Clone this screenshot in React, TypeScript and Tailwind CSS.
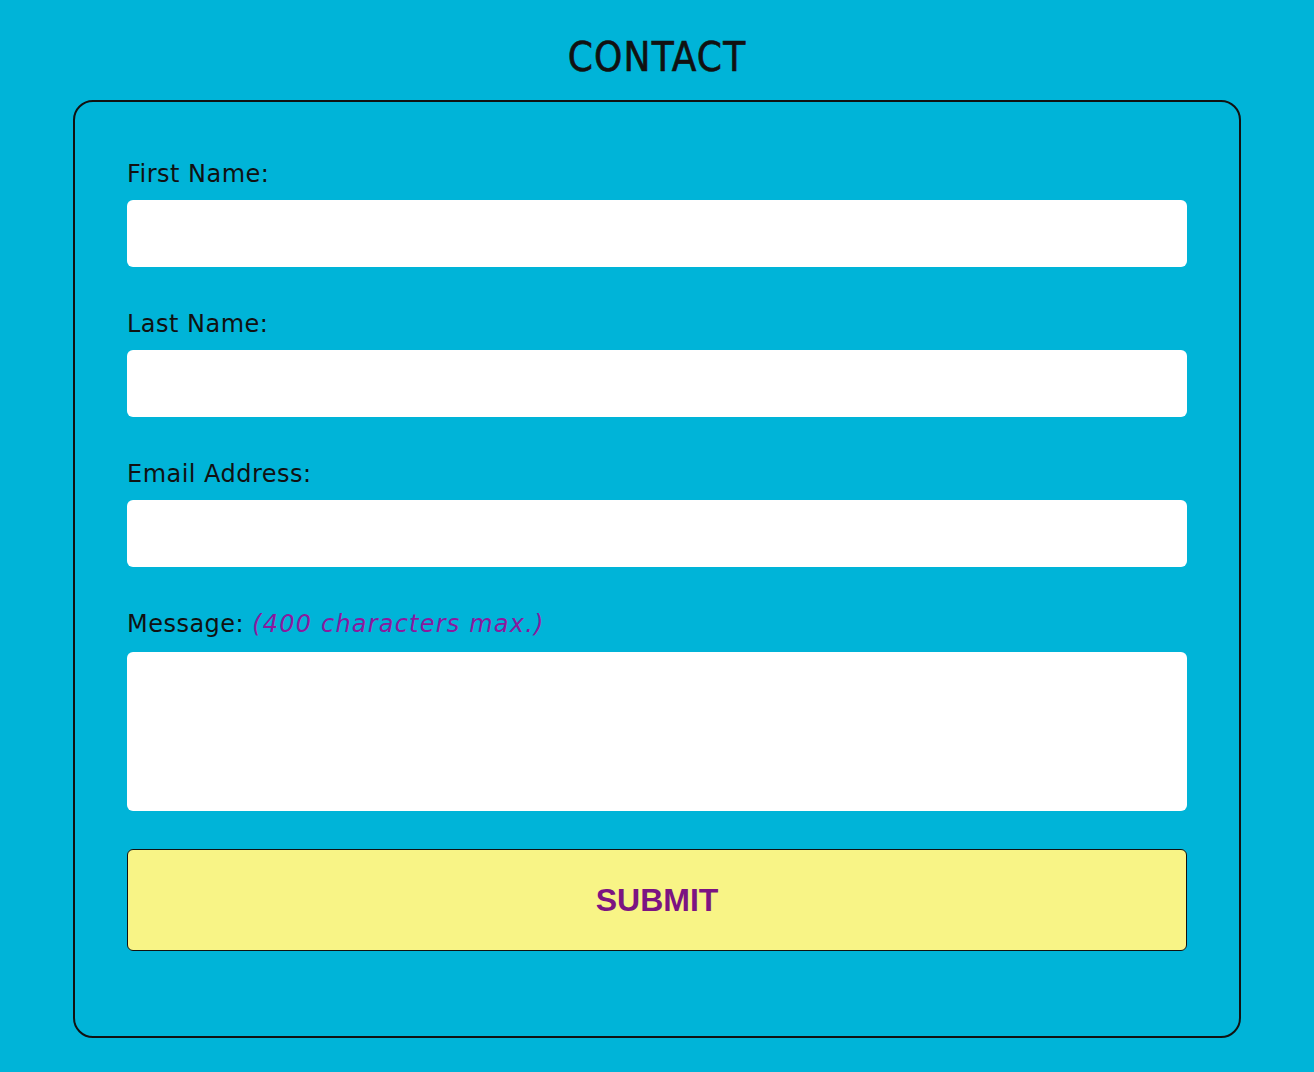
import { useState } from 'react';

export default function App() {
  const [message, setMessage] = useState('');

  const fields = [
    { id: 'first', label: 'First Name:', type: 'text' },
    { id: 'last', label: 'Last Name:', type: 'text' },
    { id: 'email', label: 'Email Address:', type: 'email' },
  ];

  return (
    <div className="min-h-[1072px] bg-[#00b4d8] pt-[34px] pb-[34px]">
      <h2 className="text-center text-[40px] leading-[46px] font-normal font-stretch-condensed tracking-[0.03em] text-[#111] [-webkit-text-stroke:0.6px_#111] [font-family:'DejaVu_Sans',sans-serif]">
        CONTACT
      </h2>

      <form
        className="mx-[73px] mt-[20px] rounded-[20px] border-2 border-[#111] px-[52px] pt-[54px] pb-[85px] [font-family:'DejaVu_Sans',sans-serif]"
        onSubmit={(e) => e.preventDefault()}
      >
        {fields.map((f) => (
          <div key={f.id} className="mb-[39px]">
            <label htmlFor={f.id} className="block h-[36px] text-[24px] leading-[36px] tracking-[0.02em] text-[#111]">
              {f.label}
            </label>
            <input
              id={f.id}
              type={f.type}
              className="mt-[8px] block h-[67px] w-full rounded-[6px] bg-white px-4 text-lg outline-none"
            />
          </div>
        ))}

        <div>
          <label htmlFor="message" className="block h-[36px] text-[24px] leading-[36px] tracking-[0.02em] text-[#111]">
            Message: <span className="italic tracking-[0.05em] text-[#8a1a9e]">(400 characters max.)</span>
          </label>
          <textarea
            id="message"
            maxLength={400}
            value={message}
            onChange={(e) => setMessage(e.target.value)}
            className="mt-[10px] block h-[159px] w-full resize-none rounded-[6px] bg-white p-4 text-lg outline-none"
          />
        </div>

        <button
          type="submit"
          className="mt-[38px] flex h-[102px] w-full items-center justify-center rounded-[6px] border border-[#111] bg-[#f8f486] text-[32px] font-bold text-[#7c1482] [font-family:'Liberation_Sans',Arial,sans-serif]"
        >
          SUBMIT
        </button>
      </form>
    </div>
  );
}
